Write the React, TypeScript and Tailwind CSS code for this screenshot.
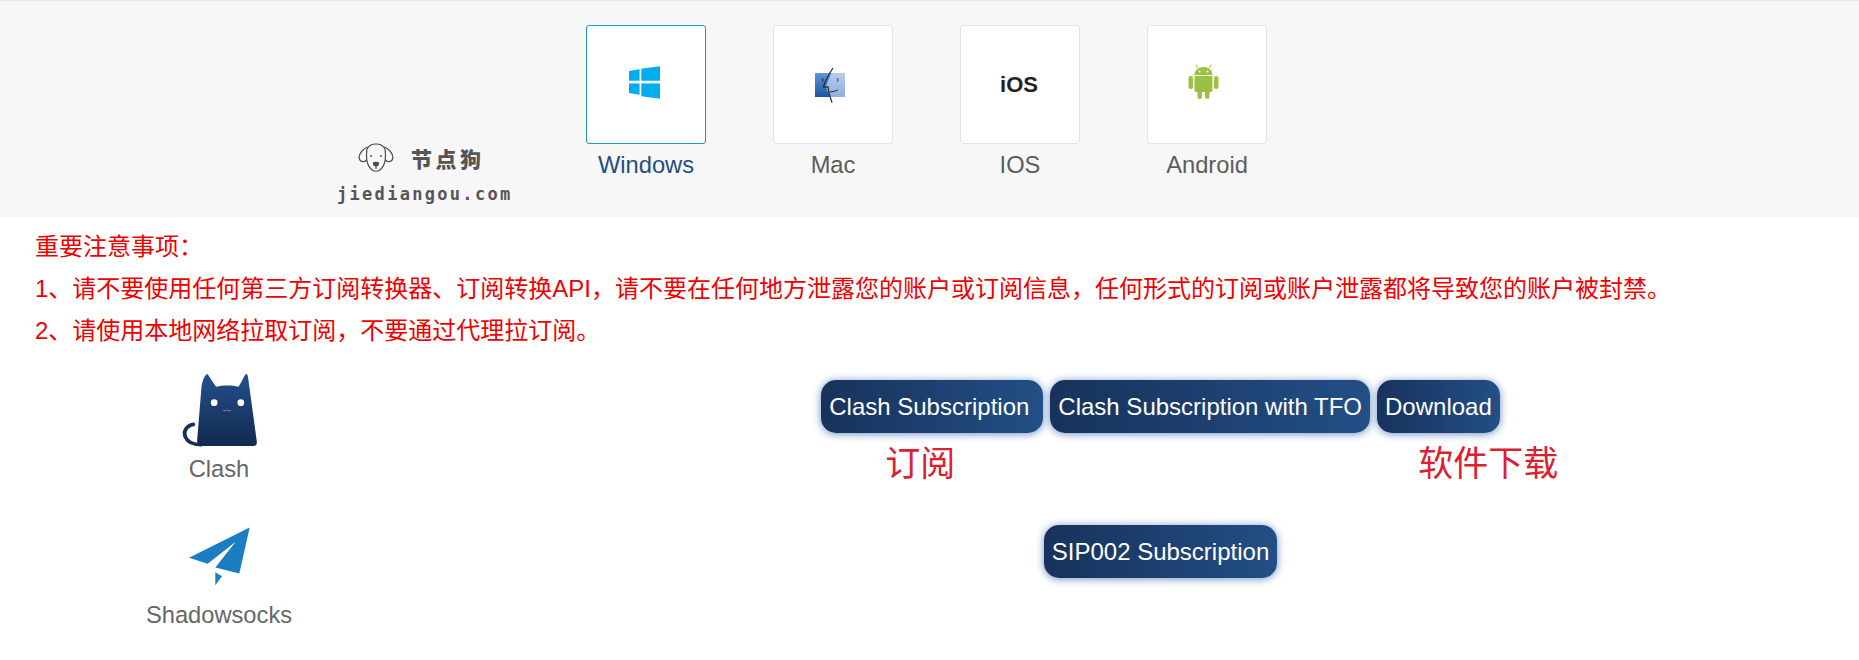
import React from "react";

const font = { sans: "font-['Liberation_Sans','Noto_Sans_CJK_SC',sans-serif]" };

function WindowsIcon() {
  return (
    <svg viewBox="84 82 91 96" className="w-[31px] h-[33px] -translate-x-[2px] -translate-y-[2px]" fill="#01adef">
      <polygon points="84,96 115,91 115,125 84,125" />
      <polygon points="120,90 175,82 175,125 120,125" />
      <polygon points="84,133 115,133 115,166 84,161" />
      <polygon points="120,133 175,133 175,178 120,170" />
    </svg>
  );
}

function MacIcon() {
  return (
    <svg viewBox="0 0 30 36" className="w-[30px] h-[36px] -translate-x-[3px]">
      <defs>
        <linearGradient id="macL" x1="0" y1="0" x2="0" y2="1">
          <stop offset="0" stopColor="#5f97d8" />
          <stop offset="1" stopColor="#1c55a5" />
        </linearGradient>
        <linearGradient id="macR" x1="0" y1="0" x2="0" y2="1">
          <stop offset="0" stopColor="#b6cdec" />
          <stop offset="1" stopColor="#8fb0dd" />
        </linearGradient>
      </defs>
      <path d="M0 6H17L11 20L15 30H0Z" fill="url(#macL)" />
      <path d="M17 6H30V30H15L11 20Z" fill="url(#macR)" />
      <path d="M18 1C14 7 10 13 8.500 20H13C13.500 25 15 30 17 35.500" fill="none" stroke="#2b2f36" strokeWidth="1.300" />
      <path d="M13 25C16 25 20 24.500 23 23" fill="none" stroke="#2b2f36" strokeWidth="1" />
      <rect x="7" y="11" width="1.300" height="4" fill="#1d3f75" />
      <rect x="22" y="11" width="1.300" height="4" fill="#4a6a9a" />
    </svg>
  );
}

function AndroidIcon() {
  return (
    <svg viewBox="0 0 30 36" className="w-[31px] h-[36px] -translate-x-[4px] -translate-y-[4px]" fill="#9cc142">
      <path d="M6 12C6 7 10 4 15 4C20 4 24 7 24 12Z" />
      <path d="M9 5L7.500 1.500M21 5L22.500 1.500" stroke="#9cc142" strokeWidth="1" />
      <circle cx="11" cy="8.500" r="1" fill="#fff" />
      <circle cx="19" cy="8.500" r="1" fill="#fff" />
      <path d="M6 13H24V27C24 28.500 23 29 22 29H8C7 29 6 28.500 6 27Z" />
      <rect x="0" y="13" width="4.500" height="13" rx="2.200" />
      <rect x="25.500" y="13" width="4.500" height="13" rx="2.200" />
      <rect x="9" y="27" width="4.500" height="9" rx="2.200" />
      <rect x="16.500" y="27" width="4.500" height="9" rx="2.200" />
    </svg>
  );
}

function DogIcon() {
  return (
    <svg viewBox="0 0 36 30" className="w-[36px] h-[30px]" fill="none" stroke="#4a4a4a" strokeWidth="1.200">
      <path d="M9 6C11 2 14 1 18 1C22 1 25 2 27 6C28 13 28 21 23 26C20 29 16 29 13 26C8 21 8 13 9 6Z" fill="#f8f8f8" />
      <path d="M10 4C6 5 1 10 1 15C2 19 6 20 8.500 17" />
      <path d="M26 4C30 5 35 10 35 15C34 19 30 20 27.500 17" />
      <circle cx="13" cy="13" r="1" fill="#4a4a4a" stroke="none" />
      <circle cx="23" cy="13" r="1" fill="#4a4a4a" stroke="none" />
      <path d="M15.500 20C16.500 19 19.500 19 20.500 20C20.500 22 19 23 18 23C17 23 15.500 22 15.500 20Z" fill="#4a4a4a" />
      <path d="M18 23V26" />
    </svg>
  );
}

function ClashIcon() {
  return (
    <svg viewBox="150 36 236 228" className="w-[79px] h-[76px]">
      <defs>
        <linearGradient id="cat" x1="0" y1="0" x2="0" y2="1">
          <stop offset="0" stopColor="#23508b" />
          <stop offset="1" stopColor="#13294f" />
        </linearGradient>
      </defs>
      <path d="M190 193C168 197 158 215 166 232C174 250 190 254 212 254" fill="none" stroke="#15305a" strokeWidth="11" strokeLinecap="round" />
      <path d="M231 42C234 42 250 72 258 80C278 75 305 75 325 80C332 72 344 42 348 42C352 42 354 50 355 62L380 245C381 254 376 258 368 258L212 258C204 258 200 250 201 240L214 80C216 62 226 42 231 42Z" fill="url(#cat)" />
      <circle cx="252" cy="128" r="10" fill="#fff" />
      <circle cx="332" cy="128" r="10" fill="#fff" />
      <path d="M279 151Q285 155 291 150Q297 155 303 151" fill="none" stroke="#9fb4d0" strokeWidth="2" />
    </svg>
  );
}

function PlaneIcon() {
  return (
    <svg viewBox="170 495 195 185" className="w-[65px] h-[62px]" fill="#1b7dc2">
      <polygon points="358,502 176,593 232,611 316,545 255,622 327,640" />
      <polygon points="255,636 275,648 255,675" />
    </svg>
  );
}

const tabs = [
  { label: "Windows", icon: <WindowsIcon />, active: true },
  { label: "Mac", icon: <MacIcon /> },
  { label: "IOS", icon: <span className="text-[22px] leading-none font-bold text-[#222] -translate-x-px">iOS</span> },
  { label: "Android", icon: <AndroidIcon /> },
];

function SubButton({ children, className = "" }: { children: React.ReactNode; className?: string }) {
  return (
    <button className={`h-[53px] rounded-[15px] pl-2 bg-gradient-to-r from-[#18325c] to-[#224f86] text-white text-[24px] leading-none whitespace-nowrap shadow-[0_1px_8px_#6d8fc0] ${className}`}>
      {children}
    </button>
  );
}

export default function App() {
  return (
    <div className={`w-[1859px] h-[660px] overflow-hidden bg-white ${font.sans}`}>
      <header className="relative h-[217px] bg-[#f7f7f7] border-t border-[#e6e6e6] flex gap-[67px] pl-[586px] pt-[24px]">
        {tabs.map((t) => (
          <div key={t.label} className="w-[120px] flex flex-col items-center">
            <div className={`w-[120px] h-[119px] bg-white rounded-[3px] border flex items-center justify-center ${t.active ? "border-[#1c9cb4]" : "border-[#e4e4e4]"}`}>
              {t.icon}
            </div>
            <div className={`mt-[7px] text-[23.700px] leading-[28px] ${t.active ? "text-[#1f4f80]" : "text-[#5c5c5c]"}`}>{t.label}</div>
          </div>
        ))}
        <div className="absolute left-[337px] top-[142px] w-[176px] flex flex-col text-[#555]">
          <div className="flex items-center gap-[17px] pl-[21px]">
            <DogIcon />
            <span className="text-[21px] leading-none font-black tracking-[3.500px] font-['Noto_Sans_CJK_SC',sans-serif]">节点狗</span>
          </div>
          <div className="mt-[12px] text-[17px] leading-[18px] font-bold tracking-[2.300px] whitespace-nowrap font-['DejaVu_Sans_Mono',monospace]">jiediangou.com</div>
        </div>
      </header>

      <section className="pl-[35px] pt-[9px] text-[#f00000] text-[24px] leading-[42px] font-['Liberation_Sans','Noto_Sans_CJK_SC',sans-serif]">
        <p>重要注意事项：</p>
        <p>1、请不要使用任何第三方订阅转换器、订阅转换API，请不要在任何地方泄露您的账户或订阅信息，任何形式的订阅或账户泄露都将导致您的账户被封禁。</p>
        <p>2、请使用本地网络拉取订阅，不要通过代理拉订阅。</p>
      </section>

      <div className="flex mt-[20px]">
        <div className="w-[438px] flex flex-col items-center text-[#666] text-[23.700px] leading-[28px]">
          <ClashIcon />
          <div className="mt-[7px]">Clash</div>
          <div className="mt-[42px]"><PlaneIcon /></div>
          <div className="mt-[14px]">Shadowsocks</div>
        </div>
        <div className="flex-1 flex flex-col items-center pl-[24px] pt-[8px]">
          <div className="relative flex gap-[7px]">
            <SubButton className="pr-[14px]">Clash Subscription</SubButton>
            <SubButton className="pr-2">Clash Subscription with TFO</SubButton>
            <SubButton className="pr-2">Download</SubButton>
            <span className="absolute left-[64px] top-[63px] text-[35px] leading-none text-[#dc2030] font-['Noto_Sans_CJK_SC',sans-serif]">订阅</span>
            <span className="absolute left-[597px] top-[63px] text-[35px] leading-none text-[#dc2030] whitespace-nowrap font-['Noto_Sans_CJK_SC',sans-serif]">软件下载</span>
          </div>
          <SubButton className="pr-2 mt-[92px]">SIP002 Subscription</SubButton>
        </div>
      </div>
    </div>
  );
}
